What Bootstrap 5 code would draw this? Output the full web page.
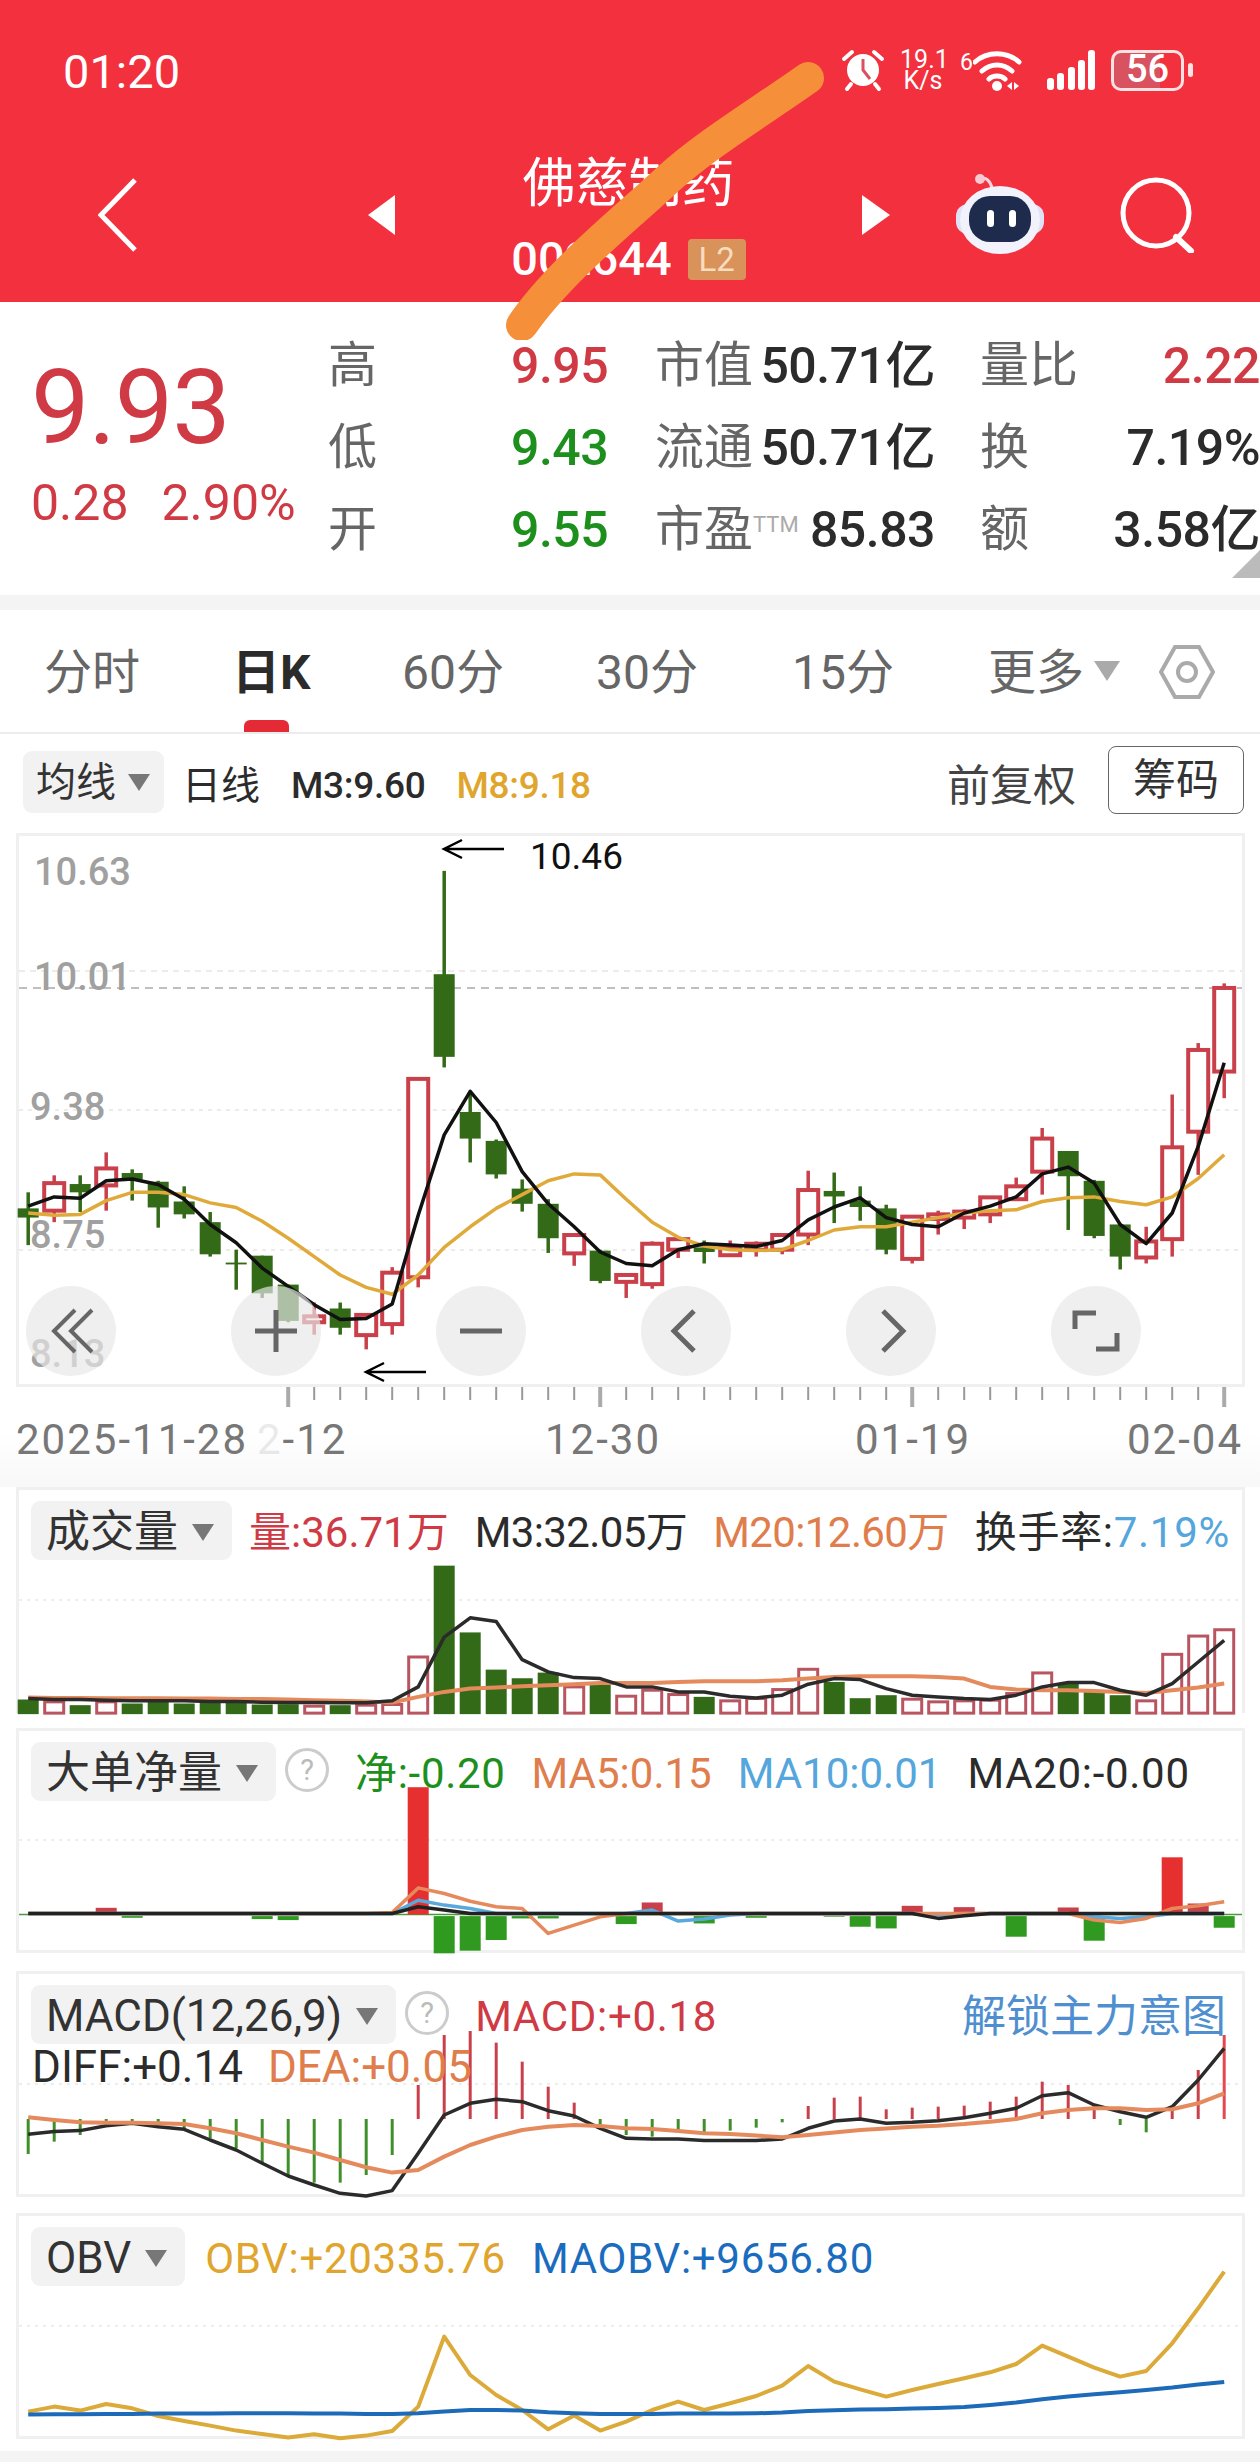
<!DOCTYPE html>
<html lang="zh-CN">
<head>
    <meta charset="UTF-8">
    <meta name="viewport" content="width=device-width, initial-scale=1.0">
    <title>佛慈制药 日K</title>
    <link href="https://cdn.jsdelivr.net/npm/bootstrap@5.3.3/dist/css/bootstrap.min.css" rel="stylesheet">
    <style>
        body {
            width: 1260px;
            height: 2462px;
            overflow: hidden;
            background: #fff;
            font-family: Roboto, "Noto Sans CJK SC", sans-serif;
            color: #2b2b2b;
        }
        .up { color: #cf3a44; }
        .down { color: #1d8f1d; }
        .dim { color: #666; }
        .orange { color: #e07d4c; }
        .sky { color: #54a6dc; }
        .gold { color: #dfa52c; }
        .deepblue { color: #1a6cbf; }
        .tight { letter-spacing: -.6px; }
        .wide { letter-spacing: .7px; }

        /* red header */
        .top-head { height: 302px; background: #f2303e; color: #fff; position: relative; }
        .status-row { height: 154px; padding: 48px 67px 0 63px; }
        .clock-text { font-size: 47px; line-height: 48px; }
        .speed { font-size: 25px; line-height: 21px; width: 46px; text-align: center; margin: 0 14px 0 15px; }
        .wifi-six { font-size: 23px; line-height: 22px; align-self: flex-start; margin-top: 4px; }
        .batt-box { width: 73px; height: 41px; border: 3px solid #ffe3e3; border-radius: 10px; font-size: 38px; line-height: 33px; font-weight: 500; text-align: center; background: linear-gradient(90deg, #d9525f 0 68%, transparent 68%); }
        .batt-nub { width: 5px; height: 14px; background: #ffe3e3; border-radius: 3px; margin-left: 4px; }
        .title-row { height: 130px; padding-left: 98px; }
        .title-row svg { margin-bottom: 8px; }
        .tri-l { margin-left: 230px; }
        .stock-block { width: 467px; }
        .stock-name { font-size: 53px; line-height: 60px; }
        .stock-code { font-size: 47px; line-height: 50px; margin-top: 20px; font-weight: 500; }
        .l2-tag { width: 58px; height: 41px; background: #d9925a; color: #f7dcc0; border-radius: 4px; font-size: 33px; line-height: 41px; text-align: center; margin-left: 16px; font-weight: 400; }
        .robot-ico { margin-left: 66px; }
        .search-ico { margin-left: 76px; }
        .scribble { position: absolute; left: 0; top: 0; z-index: 5; pointer-events: none; }

        /* quote */
        .quote-box { height: 293px; position: relative; }
        .quote-left { width: 328px; padding: 50px 0 0 31px; }
        .big-price { font-size: 104px; line-height: 112px; letter-spacing: -1px; }
        .price-sub { font-size: 50px; line-height: 58px; margin-top: 10px; }
        .price-sub span + span { margin-left: 33px; }
        .quote-grid { display: grid; grid-template-columns: 183px 144px 280px 45px 280px; grid-auto-rows: 82px; padding-top: 23px; font-size: 49px; line-height: 82px; flex: 1; }
        .quote-grid > div { white-space: nowrap; }
        .num-bold { font-weight: 500; font-size: 50px; letter-spacing: -.5px; }
        .ttm-tag { font-size: 22px; color: #aaa; vertical-align: 14px; line-height: 0; }
        .corner-mark { position: absolute; right: 0; bottom: 17px; width: 0; height: 0; border-bottom: 28px solid #bbb; border-left: 28px solid transparent; }
        .gray-band { height: 15px; background: #f4f4f4; }

        /* tabs */
        .tabs-row { height: 124px; border-bottom: 2px solid #ececec; font-size: 48px; color: #666; position: relative; }
        .tab-item { position: absolute; top: 31px; line-height: 64px; white-space: nowrap; }
        .tab-on { color: #2b2b2b; font-weight: 700; }
        .tab-on::after { content: ""; position: absolute; left: 12px; bottom: -27px; width: 45px; height: 12px; background: #e42a34; border-radius: 6px 6px 0 0; }
        .hex-ico { position: absolute; left: 1159px; top: 34px; }
        .caret-down { display: inline-block; width: 0; height: 0; border-left: 11px solid transparent; border-right: 11px solid transparent; border-top: 17px solid #777; }
        .caret-soft { border-left-width: 13px; border-right-width: 13px; border-top: 20px solid #aaa; vertical-align: 8px; margin-left: 10px; }

        /* rows above the charts */
        .drop-box { background: #f2f2f2; border-radius: 9px; height: 59px; padding: 3px 18px 0 15px; gap: 14px; font-size: 44px; line-height: 56px; color: #333; white-space: nowrap; }
        .ma-row { height: 99px; padding: 17px 16px 0 23px; font-size: 37px; line-height: 70px; }
        .ma-row .drop-box { height: 62px; line-height: 59px; font-size: 40px; width: 141px; padding: 0 0 0 13px; gap: 12px; }
        .ma-label { font-size: 39px; margin-left: 18px; }
        .ma-val { margin-left: 31px; font-weight: 500; letter-spacing: -.3px; }
        .fq-label { font-size: 43px; color: #444; margin-right: 32px; }
        .chip-btn { width: 136px; height: 68px; border: 1px solid #666; border-radius: 8px; font-size: 43px; line-height: 62px; text-align: center; margin-top: -5px; padding: 0; color: #333; background: #fff; }

        .stack-pane { display: grid; margin-left: 16px; width: 1229px; border: 3px solid #f0f0f0; }
        .stack-pane > * { grid-area: 1 / 1; }
        .stack-pane svg { display: block; overflow: visible; }
        .main-pane { height: 554px; }
        .tool-layer { align-self: end; padding: 0 0 8px 7px; gap: 115px; }
        .tool-btn { width: 90px; height: 90px; border-radius: 50%; background: rgba(232, 232, 232, .68); }
        .axis-row { height: 100px; background: linear-gradient(180deg, #fff 45%, #f8f8f8 100%); }
        .axis-row svg { display: block; }

        .sub-pane { height: 226px; }
        .sub-head { padding: 11px 0 0 12px; font-size: 42px; line-height: 64px; height: 70px; gap: 26px; white-space: nowrap; position: relative; }
        .sub-head > .drop-box + span { margin-left: -9px; }
        .sub-head > .drop-box + .gold { margin-left: -6px; }
        .pane-vol { border-bottom: 0; margin-bottom: 15px; }
        .pane-net { height: 225px; margin-bottom: 18px; }
        .pane-macd { margin-bottom: 16px; }
        .ask-mark { width: 44px; height: 44px; border: 3px solid #ccc; border-radius: 50%; font-size: 29px; line-height: 38px; text-align: center; color: #bbb; flex: none; margin-left: -17px; align-self: center; margin-top: -3px; }
        .diff-line { padding: 0 0 0 13px; font-size: 44px; line-height: 46px; gap: 25px; white-space: nowrap; }
        .unlock-link { font-size: 44px; color: #4f8fd0; margin-left: auto; margin-right: 16px; text-decoration: none; }
        .foot-band { height: 11px; background: #f4f4f4; margin-top: 12px; }
        .chart-text { font-family: Roboto, "Noto Sans CJK SC", sans-serif; }
    </style>
</head>
<body>
    <!-- header -->
    <div class="top-head">
        <div class="status-row d-flex align-items-start">
            <div class="clock-text">01:20</div>
            <div class="ms-auto d-flex align-items-center" style="height:44px">
                <svg width="44" height="44" viewBox="0 0 44 44">
                    <circle cx="22" cy="22" r="16" fill="#fff"/>
                    <path d="M22 11v11l7 9" fill="none" stroke="#d9525f" stroke-width="3"/>
                    <path d="M3 11l8-7M41 11l-8-7M10 36l-4 5M34 36l4 5" stroke="#fff" stroke-width="4" stroke-linecap="round"/>
                </svg>
                <div class="speed">19.1<br>K/s</div>
                <div class="wifi-six">6</div>
                <svg width="50" height="44" viewBox="0 0 50 44">
                    <path d="M2 14C14 3 34 3 46 14M9 23C18 15 30 15 39 23M16 31C20 27 28 27 32 31" fill="none" stroke="#fff" stroke-width="5" stroke-linecap="round"/>
                    <circle cx="24" cy="38" r="5" fill="#fff"/>
                    <path d="M34 38l5-4v8zM41 34l5 4-5 4z" fill="#fff"/>
                </svg>
                <svg class="ms-4" width="48" height="40" viewBox="0 0 48 40">
                    <rect x="0" y="28" width="7" height="12" rx="3" fill="#fff"/>
                    <rect x="10" y="23" width="7" height="17" rx="3" fill="#fff"/>
                    <rect x="21" y="17" width="7" height="23" rx="3" fill="#fff"/>
                    <rect x="31" y="10" width="7" height="30" rx="3" fill="#fff"/>
                    <rect x="41" y="0" width="7" height="40" rx="3" fill="#fff"/>
                </svg>
                <div class="batt-box ms-3">56</div>
                <div class="batt-nub"></div>
            </div>
        </div>
        <div class="title-row d-flex align-items-center">
            <svg width="40" height="74" viewBox="0 0 40 74"><path d="M37 2L3 37l34 35" fill="none" stroke="#fff" stroke-width="5"/></svg>
            <svg class="tri-l" width="27" height="40" viewBox="0 0 27 40"><path d="M27 0v40L0 20z" fill="#fff"/></svg>
            <div class="stock-block text-center">
                <div class="stock-name">佛慈制药</div>
                <div class="stock-code d-flex justify-content-center align-items-center">002644<span class="l2-tag">L2</span></div>
            </div>
            <svg width="28" height="40" viewBox="0 0 28 40"><path d="M0 0v40l28-20z" fill="#fff"/></svg>
            <svg class="robot-ico" width="88" height="82" viewBox="0 0 88 82">
                <path d="M36 14C34 6 29 3 26 5" fill="none" stroke="#f4d4dc" stroke-width="3"/>
                <circle cx="24" cy="5" r="5" fill="#f7c9d2"/>
                <rect x="0" y="30" width="88" height="30" rx="12" fill="#dfe2f6"/>
                <ellipse cx="44" cy="46" rx="40" ry="34" fill="#f1f2fc"/>
                <rect x="13" y="22" width="62" height="46" rx="21" fill="#1f2b4d"/>
                <rect x="31" y="36" width="7" height="17" rx="3.5" fill="#fff"/>
                <rect x="53" y="36" width="7" height="17" rx="3.5" fill="#fff"/>
            </svg>
            <svg class="search-ico" width="76" height="76" viewBox="0 0 76 76"><circle cx="36" cy="36" r="33" fill="none" stroke="#fff" stroke-width="5"/><path d="M56 60l15 14" stroke="#fff" stroke-width="6" stroke-linecap="round"/></svg>
        </div>
    </div>
    <svg class="scribble" width="1260" height="340" viewBox="0 0 1260 340"><path d="M808 78C760 112 705 145 667 180C630 215 560 270 522 325" fill="none" stroke="#f68f3a" stroke-width="32" stroke-linecap="round"/></svg>

    <!-- quote -->
    <div class="quote-box d-flex">
        <div class="quote-left">
            <div class="big-price up">9.93</div>
            <div class="price-sub up"><span>0.28</span><span>2.90%</span></div>
        </div>
        <div class="quote-grid">
            <div class="dim">高</div><div class="up num-bold">9.95</div>
            <div class="d-flex justify-content-between"><span class="dim">市值</span><span class="num-bold">50.71亿</span></div><div></div>
            <div class="d-flex justify-content-between"><span class="dim">量比</span><span class="up num-bold">2.22</span></div>
            <div class="dim">低</div><div class="down num-bold">9.43</div>
            <div class="d-flex justify-content-between"><span class="dim">流通</span><span class="num-bold">50.71亿</span></div><div></div>
            <div class="d-flex justify-content-between"><span class="dim">换</span><span class="num-bold">7.19%</span></div>
            <div class="dim">开</div><div class="down num-bold">9.55</div>
            <div class="d-flex justify-content-between"><span class="dim">市盈<span class="ttm-tag">TTM</span></span><span class="num-bold">85.83</span></div><div></div>
            <div class="d-flex justify-content-between"><span class="dim">额</span><span class="num-bold">3.58亿</span></div>
        </div>
        <div class="corner-mark"></div>
    </div>
    <div class="gray-band"></div>

    <!-- period tabs -->
    <div class="tabs-row">
        <span class="tab-item" style="left:44px">分时</span>
        <span class="tab-item tab-on" style="left:232px">日K</span>
        <span class="tab-item" style="left:402px">60分</span>
        <span class="tab-item" style="left:596px">30分</span>
        <span class="tab-item" style="left:792px">15分</span>
        <span class="tab-item" style="left:988px">更多<span class="caret-down caret-soft"></span></span>
        <svg class="hex-ico" width="56" height="56" viewBox="0 0 56 56"><path d="M16 3h24l14 25-14 25H16L2 28z" fill="none" stroke="#aaa" stroke-width="4"/><circle cx="28" cy="28" r="9" fill="none" stroke="#aaa" stroke-width="4"/></svg>
    </div>

    <div class="ma-row d-flex align-items-start">
        <div class="drop-box d-flex align-items-center">均线<span class="caret-down"></span></div>
        <span class="ma-label">日线</span>
        <span class="ma-val">M3:9.60</span>
        <span class="ma-val gold">M8:9.18</span>
        <span class="fq-label ms-auto">前复权</span>
        <button class="chip-btn" type="button">筹码</button>
    </div>

    <!-- kline -->
    <div class="stack-pane main-pane">
        <svg id="kline" width="1223" height="548"></svg>
        <div class="tool-layer d-flex">
            <div class="tool-btn"><svg width="90" height="90" viewBox="0 0 90 90"><path d="M49 24L28 45l21 21M66 24L45 45l21 21" fill="none" stroke="#666" stroke-width="4"/></svg></div>
            <div class="tool-btn"><svg width="90" height="90" viewBox="0 0 90 90"><path d="M24 45h42M45 24v42" fill="none" stroke="#666" stroke-width="5"/></svg></div>
            <div class="tool-btn"><svg width="90" height="90" viewBox="0 0 90 90"><path d="M24 45h42" fill="none" stroke="#666" stroke-width="5"/></svg></div>
            <div class="tool-btn"><svg width="90" height="90" viewBox="0 0 90 90"><path d="M53 25L33 45l20 20" fill="none" stroke="#666" stroke-width="5"/></svg></div>
            <div class="tool-btn"><svg width="90" height="90" viewBox="0 0 90 90"><path d="M37 25l20 20-20 20" fill="none" stroke="#666" stroke-width="5"/></svg></div>
            <div class="tool-btn"><svg width="90" height="90" viewBox="0 0 90 90"><path d="M24 43V27h21M66 47v16H45" fill="none" stroke="#666" stroke-width="5"/></svg></div>
        </div>
    </div>
    <div class="axis-row"><svg id="axis" width="1260" height="100"></svg></div>

    <!-- volume -->
    <div class="stack-pane sub-pane pane-vol">
        <svg id="vol" width="1223" height="223"></svg>
        <div class="sub-head d-flex">
            <div class="drop-box d-flex align-items-center">成交量<span class="caret-down"></span></div>
            <span class="up">量:36.71万</span>
            <span class="tight">M3:32.05万</span>
            <span class="orange tight">M20:12.60万</span>
            <span class="wide">换手率:<span class="sky">7.19%</span></span>
        </div>
    </div>

    <!-- net flow -->
    <div class="stack-pane sub-pane pane-net">
        <svg id="net" width="1223" height="219"></svg>
        <div class="sub-head d-flex">
            <div class="drop-box d-flex align-items-center">大单净量<span class="caret-down"></span></div>
            <div class="ask-mark">?</div>
            <span class="down wide">净:-0.20</span>
            <span class="orange">MA5:0.15</span>
            <span class="sky">MA10:0.01</span>
            <span class="wide">MA20:-0.00</span>
        </div>
    </div>

    <!-- macd -->
    <div class="stack-pane sub-pane pane-macd">
        <svg id="macd" width="1223" height="220"></svg>
        <div>
            <div class="sub-head d-flex">
                <div class="drop-box d-flex align-items-center">MACD(12,26,9)<span class="caret-down"></span></div>
                <div class="ask-mark">?</div>
                <span class="up wide">MACD:+0.18</span>
                <a class="unlock-link" href="#">解锁主力意图</a>
            </div>
            <div class="diff-line d-flex"><span>DIFF:+0.14</span><span class="orange">DEA:+0.05</span></div>
        </div>
    </div>

    <!-- obv -->
    <div class="stack-pane sub-pane">
        <svg id="obv" width="1223" height="220"></svg>
        <div class="sub-head d-flex">
            <div class="drop-box d-flex align-items-center">OBV<span class="caret-down"></span></div>
            <span class="gold wide">OBV:+20335.76</span>
            <span class="deepblue wide">MAOBV:+9656.80</span>
        </div>
    </div>
    <div class="foot-band"></div>

    <script>
        const RED = '#c9404a', GREEN = '#336a17';
        // candle centres, in the inner coordinates of every pane
        const X = i => 9.2 + 26 * i;

        function polyline(ys, mapY, color, width) {
            const pts = ys.map((y, i) => X(i).toFixed(1) + ',' + mapY(y).toFixed(1)).join(' ');
            return `<polyline points="${pts}" fill="none" stroke="${color}" stroke-width="${width}" stroke-linejoin="round"/>`;
        }
        function hLine(y, color, dash) {
            return `<line x1="0" x2="1223" y1="${y}" y2="${y}" stroke="${color}" stroke-width="1.5" stroke-dasharray="${dash}"/>`;
        }

        // --- kline, [bodyTop, bodyBottom, wickTop, wickBottom, up] read in screenshot crop units
        const K = [
            [1020,1040,985,1100,0],[965,1025,948,1050,1],[967,985,948,1028,0],[933,970,898,1025,1],[943,957,935,1003,0],
            [962,1018,960,1062,0],[1005,1033,972,1042,0],[1050,1120,1028,1125,0],[1138,1142,1110,1197,0],[1123,1205,1123,1215,0],
            [1186,1265,1186,1268,0],[1255,1268,1225,1295,1],[1238,1280,1225,1295,0],[1252,1296,1250,1327,1],[1160,1272,1148,1295,1],
            [738,1170,738,1192,1],[510,690,285,713,0],[810,868,765,920,0],[873,946,870,955,0],[977,1010,957,1027,0],
            [1010,1085,1000,1117,0],[1078,1118,1078,1145,1],[1112,1178,1110,1183,0],[1165,1180,1165,1215,1],[1097,1185,1092,1195,1],
            [1087,1110,1085,1128,1],[1105,1115,1090,1140,0],[1105,1122,1090,1125,1],[1097,1110,1092,1125,1],[1078,1110,1075,1120,1],
            [980,1077,938,1100,1],[982,994,942,1052,0],[1003,1017,972,1047,0],[1020,1110,1012,1120,0],[1038,1130,1035,1140,1],
            [1033,1043,1025,1077,1],[1027,1040,1022,1065,1],[996,1033,993,1052,1],[972,1000,953,1003,1],[868,940,845,990,1],
            [895,950,895,1067,0],[960,1080,958,1085,0],[1055,1125,1055,1153,0],[1092,1127,1060,1140,1],[887,1087,772,1125,1],
            [675,853,660,947,1],[540,722,530,780,1]
        ];
        const M3 = [1015,995,998,960,956,968,1000,1055,1095,1150,1190,1230,1262,1260,1228,1035,860,765,833,940,1010,1060,1115,1140,1145,1110,1097,1100,1103,1090,1045,1017,997,1040,1055,1060,1030,1015,995,945,930,965,1055,1097,1030,885,703];
        const M8 = [1030,1035,1033,1003,985,985,990,1008,1018,1048,1085,1125,1165,1192,1207,1165,1105,1060,1020,990,960,945,947,1000,1050,1083,1102,1110,1112,1110,1090,1067,1060,1060,1050,1040,1030,1025,1023,1005,997,995,1005,1012,995,955,903];
        const ky = y => 740 + y * 0.4592 - 836;
        let s = '';
        [[971,'#e6e6e6','6 5'],[1110,'#e6e6e6','4 5'],[1250,'#e6e6e6','4 5'],[988,'#aaa','8 6']].forEach(l => { s += hLine(l[0] - 836, l[1], l[2]); });
        [['10.63',871],['10.01',976],['9.38',1106],['8.75',1234],['8.13',1353]].forEach((t, i) => {
            const x = i < 2 ? 15 : 11;
            s += `<text class="chart-text" x="${x}" y="${t[1] - 836 + 14}" font-size="38" font-weight="500" fill="#a0a0a0">${t[0]}</text>`;
        });
        K.forEach((c, i) => {
            const col = c[4] ? RED : GREEN, x = X(i);
            s += `<line x1="${x}" x2="${x}" y1="${ky(c[2])}" y2="${ky(c[3])}" stroke="${col}" stroke-width="3.5"/>`;
            const top = ky(c[0]), h = ky(c[1]) - top;
            if (c[4]) s += `<rect x="${x - 10}" y="${top}" width="20" height="${h}" fill="#fff" stroke="${col}" stroke-width="4"/>`;
            else s += `<rect x="${x - 10.5}" y="${top}" width="21" height="${h}" fill="${col}"/>`;
        });
        s += polyline(M8, ky, '#e0aa3a', 3.5) + polyline(M3, ky, '#111', 3.5);
        // the two marks for highest and lowest price
        s += `<path d="M485 13H425M443 4L425 13L443 22" fill="none" stroke="#000" stroke-width="2.5"/>`;
        s += `<text class="chart-text" x="511" y="33" font-size="37" fill="#111">10.46</text>`;
        s += `<path d="M407 536H347M365 527L347 536L365 545" fill="none" stroke="#000" stroke-width="2.5"/>`;
        document.getElementById('kline').innerHTML = s;

        // --- axis under the kline
        let a = '';
        for (let i = 10; i <= 46; i++) {
            const major = (i - 10) % 12 === 0, x = 28.2 + 26 * i;
            a += `<line x1="${x}" x2="${x}" y1="0" y2="${major ? 20 : 13}" stroke="${major ? '#aaa' : '#999'}" stroke-width="${major ? 4 : 2}"/>`;
        }
        a += `<text class="chart-text" x="16" y="67" font-size="42" letter-spacing="2" fill="#777">2025-11-28</text>`;
        a += `<text class="chart-text" x="257" y="67" font-size="42" letter-spacing="2" fill="#777"><tspan opacity=".15">2</tspan>-12</text>`;
        a += `<text class="chart-text" x="545" y="67" font-size="42" letter-spacing="2" fill="#777">12-30</text>`;
        a += `<text class="chart-text" x="855" y="67" font-size="42" letter-spacing="2" fill="#777">01-19</text>`;
        a += `<text class="chart-text" x="1127" y="67" font-size="42" letter-spacing="2" fill="#777">02-04</text>`;
        document.getElementById('axis').innerHTML = a;

        // --- volume
        const vy = y => y * 0.3322 - 26 - 3;
        const V = [718,725,735,725,730,725,730,727,728,733,732,738,735,735,733,590,315,516,628,654,637,680,668,708,690,703,710,722,715,688,627,665,714,705,717,725,722,720,700,638,670,695,705,722,582,527,508];
        const VU = [0,1,0,1,0,0,0,0,0,0,0,1,0,1,1,1,0,0,0,0,0,1,0,1,1,1,0,1,1,1,1,0,0,0,1,1,1,1,1,1,0,0,0,1,1,1,1];
        const VB = [715,718,718,720,722,722,722,724,724,726,727,727,728,728,722,680,530,472,483,598,635,652,655,680,680,695,695,708,713,705,672,655,658,685,705,710,715,718,705,680,667,667,690,705,670,605,540];
        const VO = [712,713,713,714,714,714,715,715,716,716,718,720,722,724,727,710,695,685,682,678,675,672,668,668,668,665,663,663,663,660,655,650,648,648,648,650,655,680,688,690,690,692,695,698,690,682,670];
        let v = hLine(1600 - 1487 - 3, '#e8e8e8', '3 5');
        V.forEach((t, i) => {
            const top = vy(t), h = vy(762) - top;
            if (VU[i]) v += `<rect x="${X(i) - 9.5}" y="${top}" width="19" height="${h - 1}" fill="#fff" stroke="#b95560" stroke-width="3"/>`;
            else v += `<rect x="${X(i) - 10.5}" y="${top}" width="21" height="${h}" fill="${GREEN}"/>`;
        });
        v += polyline(VO, vy, '#e58a5c', 4) + polyline(VB, vy, '#2b2b2b', 3.5);
        document.getElementById('vol').innerHTML = v;

        // --- net flow
        const ny = y => 1460 + y * 0.3322 - 1728 - 3;
        const base = 1368;
        const NB = {3:1348,4:1378,9:1382,10:1385,15:985,16:1485,17:1477,18:1445,19:1380,20:1380,23:1397,24:1332,26:1395,28:1378,31:1375,32:1405,33:1410,34:1342,36:1346,38:1435,40:1347,41:1447,44:1196,45:1335,46:1408};
        const NLk = K.map(() => base - 3);
        const NO = NLk.slice(), NS = NLk.slice();
        NLk[15] = 1345; NLk[16] = 1355; NLk[35] = 1380; NLk[36] = 1372;
        Object.assign(NO, {14:1362,15:1288,16:1305,17:1328,18:1345,19:1350,20:1425,21:1400,22:1375,23:1365,41:1385,42:1392,43:1380,44:1350,45:1342,46:1330});
        Object.assign(NS, {15:1325,16:1340,17:1350,24:1355,25:1388,26:1382,27:1370,35:1370,41:1375,42:1380,43:1375});
        let n = hLine(1840 - 1728 - 3, '#e8e8e8', '3 5') + hLine(ny(base), '#4a9a3a', '1 0');
        Object.keys(NB).forEach(k => {
            const t = NB[k], i = +k;
            const big = t < 1300;
            const col = t < base ? (big ? '#e5302f' : '#c9404a') : '#2f9a1f';
            const y0 = t < base ? ny(t) : ny(base + 5), y1 = t < base ? ny(base) : ny(t);
            n += `<rect x="${X(i) - 10.5}" y="${y0}" width="21" height="${y1 - y0}" fill="${col}"/>`;
        });
        n += polyline(NS, ny, '#5aa9dc', 3.5) + polyline(NO, ny, '#e58a5c', 3.5) + polyline(NLk, ny, '#222', 3.5);
        document.getElementById('net').innerHTML = n;

        // --- macd
        const my = y => y * 0.3333 - 11 - 3;
        const MB = [582,545,525,495,485,497,505,535,565,612,650,668,668,645,585,375,225,213,248,305,380,428,500,525,530,512,518,512,503,487,438,413,410,448,443,440,437,425,410,365,375,435,495,517,445,330,225];
        const DIFF = [523,515,512,497,490,500,508,540,570,610,648,675,700,708,692,580,465,430,418,425,452,468,505,535,537,537,542,542,542,537,505,483,477,490,487,482,473,460,445,407,398,435,455,472,440,360,265];
        const DEA = [472,480,487,488,488,490,492,505,520,540,560,578,600,622,638,630,590,555,530,510,500,495,498,505,507,513,520,522,527,532,525,518,510,506,500,497,492,485,477,460,450,445,445,450,448,430,400];
        let m = hLine(372 * 0.3333 - 11 - 3, '#e8e8e8', '3 5');
        MB.forEach((t, i) => {
            const col = t < 477 ? (i === 46 ? '#e5484f' : '#c9404a') : '#3f8f2a';
            m += `<line x1="${X(i)}" x2="${X(i)}" y1="${my(477)}" y2="${my(t)}" stroke="${col}" stroke-width="3"/>`;
        });
        m += polyline(DIFF, my, '#2b2b2b', 3.5) + polyline(DEA, my, '#e58a5c', 4);
        document.getElementById('macd').innerHTML = m;

        // --- obv
        const oy = y => 1960 + y * 0.3333 - 2213 - 3;
        const OBV = [1355,1340,1352,1332,1345,1368,1383,1397,1412,1422,1433,1423,1435,1427,1413,1340,1130,1245,1305,1350,1408,1367,1412,1385,1350,1325,1350,1330,1308,1277,1218,1265,1288,1310,1290,1272,1255,1237,1212,1157,1190,1223,1250,1233,1150,1045,935];
        const MAO = [1364,1363,1363,1362,1362,1361,1361,1361,1360,1360,1360,1361,1361,1362,1362,1360,1355,1350,1350,1352,1357,1360,1362,1362,1362,1361,1361,1361,1360,1358,1353,1351,1349,1348,1346,1344,1341,1335,1328,1318,1310,1303,1297,1290,1283,1274,1266];
        let o = hLine(1097 * 0.3333 + 1960 - 2213 - 3, '#e8e8e8', '3 5');
        o += polyline(OBV, oy, '#dcaa38', 4) + polyline(MAO, oy, '#1d6bb8', 4);
        document.getElementById('obv').innerHTML = o;
    </script>
    <script src="https://cdn.jsdelivr.net/npm/bootstrap@5.3.3/dist/js/bootstrap.bundle.min.js"></script>
</body>
</html>
